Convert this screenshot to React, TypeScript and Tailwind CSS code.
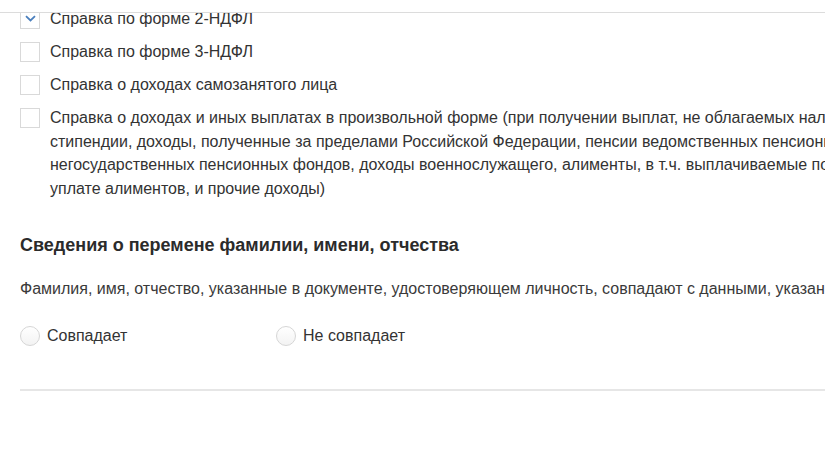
import { useState } from 'react';

type DocOption = {
  id: string;
  lines: string[];
};

const docOptions: DocOption[] = [
  { id: '2ndfl', lines: ['Справка по форме 2-НДФЛ'] },
  { id: '3ndfl', lines: ['Справка по форме 3-НДФЛ'] },
  { id: 'selfemployed', lines: ['Справка о доходах самозанятого лица'] },
  {
    id: 'other',
    lines: [
      'Справка о доходах и иных выплатах в произвольной форме (при получении выплат, не облагаемых налогом на доходы физических лиц,',
      'стипендии, доходы, полученные за пределами Российской Федерации, пенсии ведомственных пенсионных фондов и',
      'негосударственных пенсионных фондов, доходы военнослужащего, алименты, в т.ч. выплачиваемые по соглашению об',
      'уплате алиментов, и прочие доходы)',
    ],
  },
];

function CheckBox({ checked }: { checked: boolean }) {
  return (
    <span className="mt-[1.5px] flex h-[20px] w-[20px] shrink-0 items-center justify-center border border-[#d9d9d9] bg-white">
      {checked && (
        <svg width="11" height="7" viewBox="0 0 11 7" fill="none">
          <path d="M1 1.2L5.5 5.5L10 1.2" stroke="#4a7fbd" strokeWidth="1.8" />
        </svg>
      )}
    </span>
  );
}

function Radio({ label, checked, onClick }: { label: string; checked: boolean; onClick: () => void }) {
  return (
    <button type="button" onClick={onClick} className="flex w-[256px] items-center gap-[7px] text-left">
      <span className="flex h-[20px] w-[20px] shrink-0 items-center justify-center rounded-full border border-[#d6d6d6] bg-gradient-to-b from-white to-[#f3f3f3]">
        {checked && <span className="h-[8px] w-[8px] rounded-full bg-[#4a7fbd]" />}
      </span>
      <span className="text-[16px] leading-[23.5px] text-[#333]">{label}</span>
    </button>
  );
}

export default function App() {
  const [checked, setChecked] = useState<Record<string, boolean>>({ '2ndfl': true });
  const [match, setMatch] = useState<string | null>(null);

  return (
    <div
      className="relative h-[452px] w-[825px] overflow-hidden bg-white"
      style={{ fontFamily: '"Liberation Sans", Arial, sans-serif' }}
    >
      {/* Sticky header edge */}
      <div className="absolute left-0 right-0 top-0 z-10 h-[13px] border-b border-[#dcdcdc] bg-white" />

      <div className="w-[1100px] px-[20px] pt-[7px]">
        {/* Documents list */}
        <div className="flex flex-col gap-[9.5px]">
          {docOptions.map((opt) => (
            <label
              key={opt.id}
              className="flex cursor-pointer items-start gap-[10px]"
              onClick={() => setChecked((s) => ({ ...s, [opt.id]: !s[opt.id] }))}
            >
              <CheckBox checked={!!checked[opt.id]} />
              <span className="text-[16px] leading-[23.5px] text-[#333]">
                {opt.lines.map((line) => (
                  <span key={line} className="block whitespace-nowrap">
                    {line}
                  </span>
                ))}
              </span>
            </label>
          ))}
        </div>

        {/* Name change section */}
        <h3 className="mt-[33px] text-[18px] font-bold leading-[24px] text-[#2b2b2b]">
          Сведения о перемене фамилии, имени, отчества
        </h3>
        <p className="mt-[22px] whitespace-nowrap text-[16px] leading-[20px] text-[#3a3a3a]">
          Фамилия, имя, отчество, указанные в документе, удостоверяющем личность, совпадают с данными, указанными в заявлении
        </p>
        <div className="mt-[25px] flex">
          <Radio label="Совпадает" checked={match === 'yes'} onClick={() => setMatch('yes')} />
          <Radio label="Не совпадает" checked={match === 'no'} onClick={() => setMatch('no')} />
        </div>

        <div className="mt-[41px] h-[2px] bg-[#e6e6e6]" />
      </div>
    </div>
  );
}
